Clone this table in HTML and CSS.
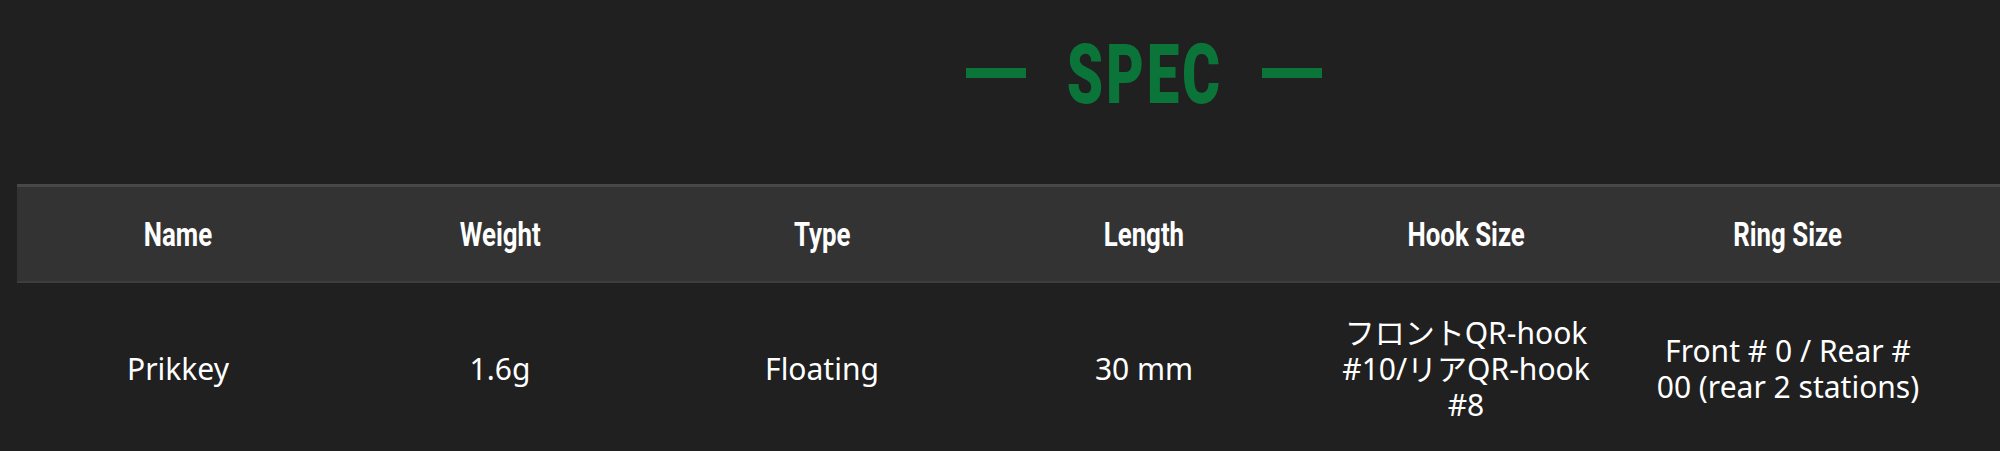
FILE: index.html
```html
<!DOCTYPE html>
<html lang="ja">
<head>
<meta charset="utf-8">
<title>SPEC</title>
<link rel="stylesheet" href="styles.css">
</head>
<body>
<div class="page">
  <section class="spec">
    <h2 class="spec-title"><span class="spec-title__box"><span class="spec-title__text">SPEC</span></span></h2>
    <table class="spec-table">
      <thead>
        <tr>
          <th><span class="th-label">Name</span></th>
          <th><span class="th-label">Weight</span></th>
          <th><span class="th-label">Type</span></th>
          <th><span class="th-label">Length</span></th>
          <th><span class="th-label">Hook Size</span></th>
          <th><span class="th-label">Ring Size</span></th>
          <th></th>
        </tr>
      </thead>
      <tbody>
        <tr>
          <td>Prikkey</td>
          <td>1.6g</td>
          <td>Floating</td>
          <td>30 mm</td>
          <td>フロントQR-hook #10/リアQR-hook #8</td>
          <td>Front # 0 / Rear # 00 (rear 2 stations)</td>
          <td></td>
        </tr>
      </tbody>
    </table>
  </section>
</div>
</body>
</html>
```

FILE: styles.css
```css
html, body {
  margin: 0;
  padding: 0;
  background: #202020;
  overflow: hidden;
}

.page {
  width: 2254px;
  padding-left: 17px;
}

.spec-title {
  margin: 0;
  height: 184px;
  padding-top: 31px;
  box-sizing: border-box;
  display: flex;
  justify-content: center;
  align-items: flex-start;
  color: #0b7539;
  font-family: Roboto, "Noto Sans", sans-serif;
  font-weight: 900;
  font-size: 83px;
  line-height: 88px;
}

.spec-title::before,
.spec-title::after {
  content: "";
  flex: none;
  width: 60px;
  height: 10px;
  margin-top: 37px;
  background: #0b7539;
}

.spec-title__box {
  flex: none;
  width: 149px;
  margin: 0 44px 0 43px;
  display: flex;
  justify-content: center;
}

.spec-title__text {
  flex: none;
  white-space: nowrap;
  letter-spacing: 4px;
  padding-left: 4px;
  transform: scaleX(0.7);
}

.spec-table {
  width: 2254px;
  table-layout: fixed;
  border-collapse: collapse;
  border-spacing: 0;
}

.spec-table th {
  height: 94px;
  padding: 0;
  background: #333333;
  border-top: 3px solid #474747;
  border-bottom: 2px solid #3d3d3d;
  color: #ffffff;
  font-family: Roboto, "Noto Sans", sans-serif;
  font-weight: 700;
  font-size: 34px;
  text-align: center;
  vertical-align: middle;
  white-space: nowrap;
}

.th-label {
  display: inline-block;
  transform: scaleX(0.76);
}

.spec-table td {
  padding: 32px 26px;
  color: #ffffff;
  font-family: "Noto Sans", "Noto Sans CJK JP", sans-serif;
  font-size: 30px;
  line-height: 36px;
  text-align: center;
  vertical-align: middle;
}
```
